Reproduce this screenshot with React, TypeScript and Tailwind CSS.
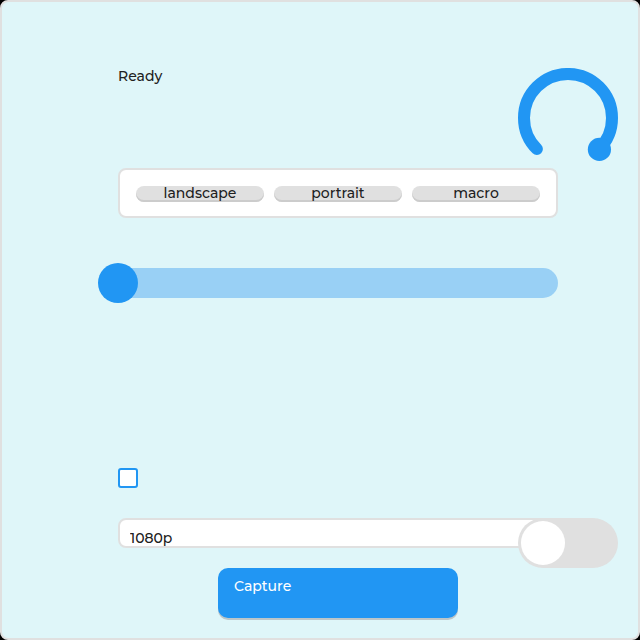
import { useState } from "react";

const modes = ["landscape", "portrait", "macro"];

function ZoomDial() {
  const [value, setValue] = useState(100);
  const angle = ((135 + value * 2.7) * Math.PI) / 180;
  return (
    <label className="block size-[100px] shrink-0">
      <input
        type="range"
        aria-label="Zoom"
        className="sr-only"
        value={value}
        onChange={(e) => setValue(Number(e.target.value))}
      />
      <svg viewBox="0 0 100 100" className="block size-full" aria-hidden="true">
        <path
          d="M18.9 81.1A44 44 0 1 1 81.1 81.1"
          fill="none"
          stroke="#2196f3"
          strokeWidth="12"
          strokeLinecap="round"
        />
        <circle cx={50.3 + 44 * Math.cos(angle)} cy={50.3 + 44 * Math.sin(angle)} r="11.6" fill="#2196f3" />
      </svg>
    </label>
  );
}

export default function App() {
  const [exposure, setExposure] = useState(0);
  return (
    <div className="min-h-screen bg-black font-['Montserrat','Inter',sans-serif] text-sm leading-4 font-medium text-[#212121]">
      <main className="flex min-h-screen flex-col rounded-lg border-2 border-[#e0e0e0] bg-[#dff6f9] pt-[66px] pr-5 pb-5 pl-[116px]">
        <div className="flex justify-between">
          <p role="status">Ready</p>
          <ZoomDial />
        </div>

        <div className="mr-[60px] flex h-[50px] items-start gap-2.5 rounded-lg border-2 border-[#e0e0e0] bg-white p-4">
          {modes.map((mode) => (
            <button
              key={mode}
              type="button"
              className="flex h-4 flex-1 items-center justify-center rounded-lg bg-[#e0e0e0] pb-0.5 tracking-normal shadow-[inset_0_-2px_0_#cccccc]"
            >
              {mode}
            </button>
          ))}
        </div>

        <div className="relative mt-[50px] mr-[60px] h-[30px] rounded-full bg-[#99d0f5]">
          <input
            type="range"
            aria-label="Exposure"
            value={exposure}
            onChange={(e) => setExposure(Number(e.target.value))}
            className="absolute -inset-x-5 -top-[5px] h-10 w-[calc(100%+40px)] appearance-none bg-transparent [&::-webkit-slider-thumb]:size-10 [&::-webkit-slider-thumb]:appearance-none [&::-webkit-slider-thumb]:rounded-full [&::-webkit-slider-thumb]:bg-[#2196f3]"
          />
        </div>

        <input
          type="checkbox"
          aria-label="Timer"
          className="mt-[170px] size-5 appearance-none rounded-[3px] border-2 border-[#2196f3] bg-white checked:bg-[#2196f3]"
        />

        <div className="relative mt-[30px] h-[50px]">
          <div className="mr-[60px]">
            <select
              aria-label="Resolution"
              defaultValue="1080p"
              className="block h-[30px] w-full appearance-none rounded-lg border-2 border-[#e0e0e0] bg-white pt-2.5 pl-2.5"
            >
              <option>720p</option>
              <option>1080p</option>
            </select>
          </div>
          <input
            type="checkbox"
            role="switch"
            aria-label="Flash"
            className="absolute top-0 right-0 h-[50px] w-[100px] appearance-none rounded-full bg-[#e0e0e0] p-[3px] before:block before:size-11 before:rounded-full before:bg-white checked:bg-[#2196f3] checked:before:ml-auto"
          />
        </div>

        <div className="mr-[60px] flex justify-center">
          <button
            type="button"
            className="flex h-[50px] w-60 items-start rounded-[10px] bg-[#2196f3] px-4 pt-2.5 text-white shadow-[0_2px_0_#bcc6c9]"
          >
            Capture
          </button>
        </div>
      </main>
    </div>
  );
}
